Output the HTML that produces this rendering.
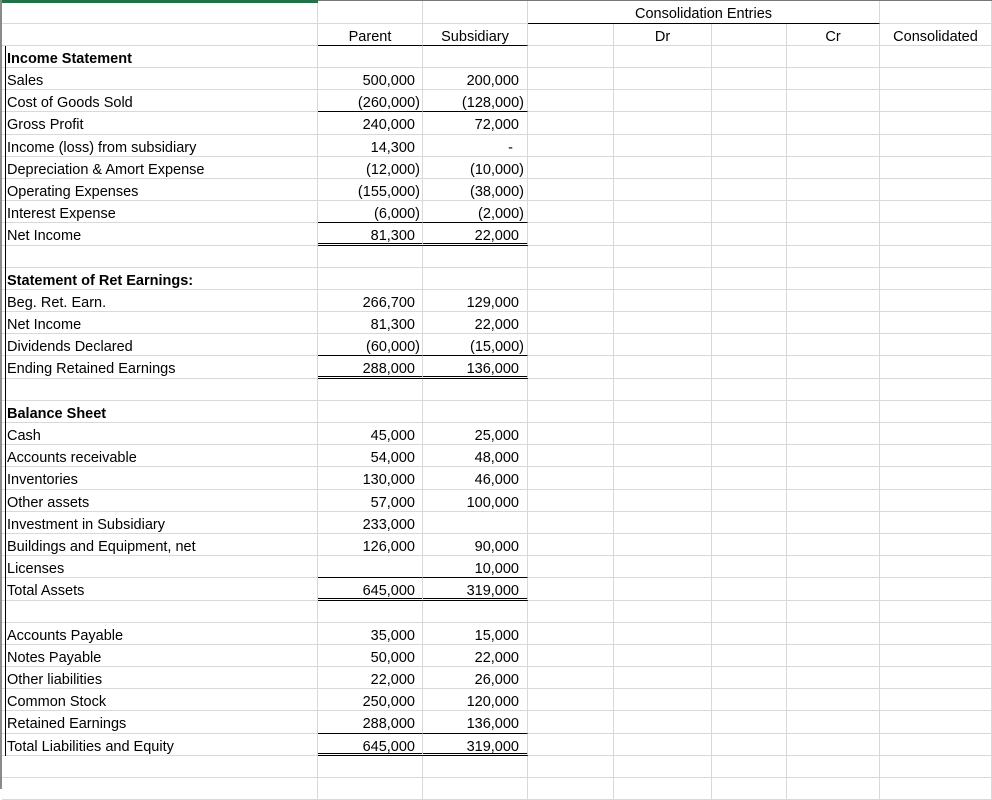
<!DOCTYPE html>
<html><head><meta charset="utf-8"><style>
*{margin:0;padding:0;box-sizing:border-box}
body{width:992px;height:789px;overflow:hidden;background:#fff;font-family:"Liberation Sans",Arial,sans-serif;font-size:14.5px;color:#000;position:relative}
.r{display:flex;height:22.2px}
.r>div{height:100%;border-right:1px solid #d9d9d9;border-bottom:1px solid #d9d9d9;line-height:26px;white-space:nowrap;overflow:visible}
.a{width:316px;padding-left:5px}
.b,.c{width:105px;text-align:right}
.b{padding-right:2px}.c{padding-right:3px}
.d{width:86px}.e{width:98px;text-align:center}.f{width:75px}.g{width:93px;text-align:center}.h{width:112px;text-align:center}
i{display:inline-block;width:5px}
.r>div.ul{border-bottom:1px solid #000}
.r>div.dbl{border-bottom:3px double #000}
b{font-weight:bold}
</style></head><body>
<div style="position:absolute;left:0;top:0;width:318px;height:3px;background:#217346"></div>
<div style="position:absolute;left:318px;top:0;width:674px;height:1px;background:#777"></div>
<div style="margin-left:2px">
<div class="r" style="height:24px"><div class="a"></div><div class="b"></div><div class="c"></div><div style="width:352px;text-align:center;border-bottom:1px solid #000;border-right:1px solid #d9d9d9;line-height:28px">Consolidation Entries</div><div class="h"></div></div>
<div class="r" style="height:22px"><div class="a"></div><div class="b ul" style="text-align:center;padding:0">Parent</div><div class="c ul" style="text-align:center;padding:0">Subsidiary</div><div class="d"></div><div class="e">Dr</div><div class="f"></div><div class="g">Cr</div><div class="h">Consolidated</div></div>
<div class="r" style="height:22px"><div class="a"><b>Income Statement</b></div><div class="b"></div><div class="c"></div><div class="d"></div><div class="e"></div><div class="f"></div><div class="g"></div><div class="h"></div></div>
<div class="r"><div class="a">Sales</div><div class="b">500,000<i></i></div><div class="c">200,000<i></i></div><div class="d"></div><div class="e"></div><div class="f"></div><div class="g"></div><div class="h"></div></div>
<div class="r"><div class="a">Cost of Goods Sold</div><div class="b ul">(260,000)</div><div class="c ul">(128,000)</div><div class="d"></div><div class="e"></div><div class="f"></div><div class="g"></div><div class="h"></div></div>
<div class="r"><div class="a">Gross Profit</div><div class="b">240,000<i></i></div><div class="c">72,000<i></i></div><div class="d"></div><div class="e"></div><div class="f"></div><div class="g"></div><div class="h"></div></div>
<div class="r"><div class="a">Income (loss) from subsidiary</div><div class="b">14,300<i></i></div><div class="c" style="padding-right:14px">-</div><div class="d"></div><div class="e"></div><div class="f"></div><div class="g"></div><div class="h"></div></div>
<div class="r"><div class="a">Depreciation &amp; Amort Expense</div><div class="b">(12,000)</div><div class="c">(10,000)</div><div class="d"></div><div class="e"></div><div class="f"></div><div class="g"></div><div class="h"></div></div>
<div class="r"><div class="a">Operating Expenses</div><div class="b">(155,000)</div><div class="c">(38,000)</div><div class="d"></div><div class="e"></div><div class="f"></div><div class="g"></div><div class="h"></div></div>
<div class="r"><div class="a">Interest Expense</div><div class="b ul">(6,000)</div><div class="c ul">(2,000)</div><div class="d"></div><div class="e"></div><div class="f"></div><div class="g"></div><div class="h"></div></div>
<div class="r"><div class="a">Net Income</div><div class="b dbl">81,300<i></i></div><div class="c dbl">22,000<i></i></div><div class="d"></div><div class="e"></div><div class="f"></div><div class="g"></div><div class="h"></div></div>
<div class="r"><div class="a"></div><div class="b"></div><div class="c"></div><div class="d"></div><div class="e"></div><div class="f"></div><div class="g"></div><div class="h"></div></div>
<div class="r"><div class="a"><b>Statement of Ret Earnings:</b></div><div class="b"></div><div class="c"></div><div class="d"></div><div class="e"></div><div class="f"></div><div class="g"></div><div class="h"></div></div>
<div class="r"><div class="a">Beg. Ret. Earn.</div><div class="b">266,700<i></i></div><div class="c">129,000<i></i></div><div class="d"></div><div class="e"></div><div class="f"></div><div class="g"></div><div class="h"></div></div>
<div class="r"><div class="a">Net Income</div><div class="b">81,300<i></i></div><div class="c">22,000<i></i></div><div class="d"></div><div class="e"></div><div class="f"></div><div class="g"></div><div class="h"></div></div>
<div class="r"><div class="a">Dividends Declared</div><div class="b ul">(60,000)</div><div class="c ul">(15,000)</div><div class="d"></div><div class="e"></div><div class="f"></div><div class="g"></div><div class="h"></div></div>
<div class="r"><div class="a">Ending Retained Earnings</div><div class="b dbl">288,000<i></i></div><div class="c dbl">136,000<i></i></div><div class="d"></div><div class="e"></div><div class="f"></div><div class="g"></div><div class="h"></div></div>
<div class="r"><div class="a"></div><div class="b"></div><div class="c"></div><div class="d"></div><div class="e"></div><div class="f"></div><div class="g"></div><div class="h"></div></div>
<div class="r"><div class="a"><b>Balance Sheet</b></div><div class="b"></div><div class="c"></div><div class="d"></div><div class="e"></div><div class="f"></div><div class="g"></div><div class="h"></div></div>
<div class="r"><div class="a">Cash</div><div class="b">45,000<i></i></div><div class="c">25,000<i></i></div><div class="d"></div><div class="e"></div><div class="f"></div><div class="g"></div><div class="h"></div></div>
<div class="r"><div class="a">Accounts receivable</div><div class="b">54,000<i></i></div><div class="c">48,000<i></i></div><div class="d"></div><div class="e"></div><div class="f"></div><div class="g"></div><div class="h"></div></div>
<div class="r"><div class="a">Inventories</div><div class="b">130,000<i></i></div><div class="c">46,000<i></i></div><div class="d"></div><div class="e"></div><div class="f"></div><div class="g"></div><div class="h"></div></div>
<div class="r"><div class="a">Other assets</div><div class="b">57,000<i></i></div><div class="c">100,000<i></i></div><div class="d"></div><div class="e"></div><div class="f"></div><div class="g"></div><div class="h"></div></div>
<div class="r"><div class="a">Investment in Subsidiary</div><div class="b">233,000<i></i></div><div class="c"></div><div class="d"></div><div class="e"></div><div class="f"></div><div class="g"></div><div class="h"></div></div>
<div class="r"><div class="a">Buildings and Equipment, net</div><div class="b">126,000<i></i></div><div class="c">90,000<i></i></div><div class="d"></div><div class="e"></div><div class="f"></div><div class="g"></div><div class="h"></div></div>
<div class="r"><div class="a">Licenses</div><div class="b ul"></div><div class="c ul">10,000<i></i></div><div class="d"></div><div class="e"></div><div class="f"></div><div class="g"></div><div class="h"></div></div>
<div class="r"><div class="a">Total Assets</div><div class="b dbl">645,000<i></i></div><div class="c dbl">319,000<i></i></div><div class="d"></div><div class="e"></div><div class="f"></div><div class="g"></div><div class="h"></div></div>
<div class="r"><div class="a"></div><div class="b"></div><div class="c"></div><div class="d"></div><div class="e"></div><div class="f"></div><div class="g"></div><div class="h"></div></div>
<div class="r"><div class="a">Accounts Payable</div><div class="b">35,000<i></i></div><div class="c">15,000<i></i></div><div class="d"></div><div class="e"></div><div class="f"></div><div class="g"></div><div class="h"></div></div>
<div class="r"><div class="a">Notes Payable</div><div class="b">50,000<i></i></div><div class="c">22,000<i></i></div><div class="d"></div><div class="e"></div><div class="f"></div><div class="g"></div><div class="h"></div></div>
<div class="r"><div class="a">Other liabilities</div><div class="b">22,000<i></i></div><div class="c">26,000<i></i></div><div class="d"></div><div class="e"></div><div class="f"></div><div class="g"></div><div class="h"></div></div>
<div class="r"><div class="a">Common Stock</div><div class="b">250,000<i></i></div><div class="c">120,000<i></i></div><div class="d"></div><div class="e"></div><div class="f"></div><div class="g"></div><div class="h"></div></div>
<div class="r"><div class="a">Retained Earnings</div><div class="b ul">288,000<i></i></div><div class="c ul">136,000<i></i></div><div class="d"></div><div class="e"></div><div class="f"></div><div class="g"></div><div class="h"></div></div>
<div class="r"><div class="a">Total Liabilities and Equity</div><div class="b dbl">645,000<i></i></div><div class="c dbl">319,000<i></i></div><div class="d"></div><div class="e"></div><div class="f"></div><div class="g"></div><div class="h"></div></div>
<div class="r"><div class="a"></div><div class="b"></div><div class="c"></div><div class="d"></div><div class="e"></div><div class="f"></div><div class="g"></div><div class="h"></div></div>
<div class="r"><div class="a"></div><div class="b"></div><div class="c"></div><div class="d"></div><div class="e"></div><div class="f"></div><div class="g"></div><div class="h"></div></div>
</div>
<div style="position:absolute;left:0;top:0;width:2px;height:789px;background:#8a8a8a"></div>
<div style="position:absolute;left:5px;top:46px;width:1px;height:710px;background:#000"></div>
</body></html>
